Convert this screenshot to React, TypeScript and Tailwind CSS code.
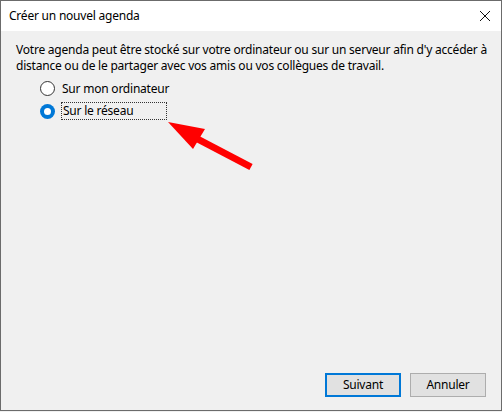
export default function App() {
  return (
    <div className="relative h-[412px] w-[502px] bg-[#f0f0f0]">
      <div
        className="flex h-[411px] w-[502px] flex-col border border-[#6b6b6b] text-[12px] tracking-[-0.22px] text-black"
        style={{ fontFamily: '"Noto Sans", "Liberation Sans", sans-serif' }}
      >
        <div className="flex h-[30px] shrink-0 items-center justify-between bg-white pl-[8px] pr-[9px]">
          <span>Créer un nouvel agenda</span>
          <svg width="12" height="12" viewBox="0 0 12 12" className="mr-[1px]">
            <path d="M1 1 L11 11 M11 1 L1 11" stroke="#111" strokeWidth="1" />
          </svg>
        </div>
        <div className="flex flex-1 flex-col px-[15px] pt-[11px] pb-[13px]">
          <p className="leading-[16px]">
            <span className="block whitespace-nowrap">
              Votre agenda peut être stocké sur votre ordinateur ou sur un serveur afin d'y accéder à
            </span>
            <span className="block whitespace-nowrap">
              distance ou de le partager avec vos amis ou vos collègues de travail.
            </span>
          </p>
          <div className="mt-[3px] flex flex-col pl-[24px]">
            <label className="flex h-[23px] items-center gap-[7px]">
              <span className="h-[15px] w-[15px] rounded-full border border-[#333] bg-white" />
              <span>Sur mon ordinateur</span>
            </label>
            <label className="flex h-[22px] items-center gap-[6px]">
              <span className="flex h-[15px] w-[15px] items-center justify-center rounded-full bg-[#0078d7]">
                <span className="h-[7px] w-[7px] rounded-full bg-white" />
              </span>
              <span className="flex h-[18px] w-[106px] items-center border border-dotted border-[#333] pl-[1px]">
                Sur le réseau
              </span>
            </label>
          </div>
          <div className="flex-1" />
          <div className="flex justify-end gap-[9px]">
            <button className="h-[24px] w-[76px] border-2 border-[#0078d7] bg-[#e1e1e1]">Suivant</button>
            <button className="h-[24px] w-[76px] border border-[#adadad] bg-[#e1e1e1]">Annuler</button>
          </div>
        </div>
      </div>
      <svg className="absolute left-0 top-0" width="502" height="412" viewBox="0 0 502 412">
        <line x1="188" y1="134" x2="251" y2="167" stroke="#ff0000" strokeWidth="7" />
        <polygon points="168,122 205,129 193,149" fill="#ff0000" />
      </svg>
    </div>
  );
}
